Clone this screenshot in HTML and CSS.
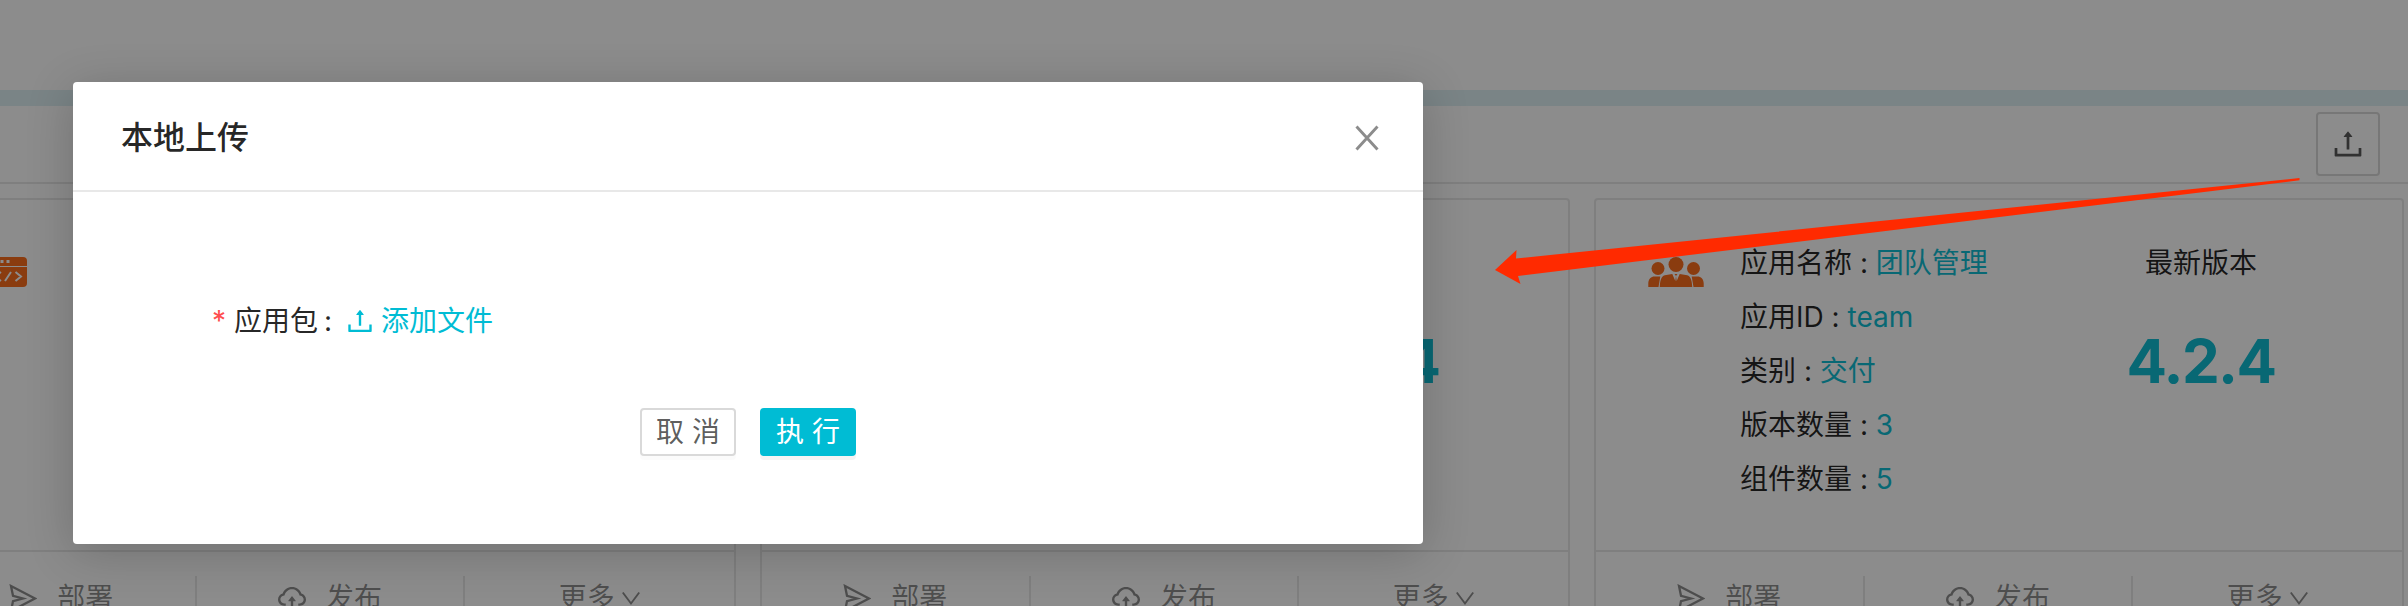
FILE: index.html
```html
<!DOCTYPE html>
<html lang="zh-CN">
<head>
<meta charset="utf-8">
<title>本地上传</title>
<link rel="stylesheet" href="styles.css">
</head>
<body>
<svg class="defs" width="0" height="0">
  <symbol id="upload" viewBox="64 64 896 896">
    <path d="M400 317.700h73.900V656c0 4.400 3.600 8 8 8h60c4.400 0 8-3.600 8-8V317.700H624c6.700 0 10.400-7.700 6.300-12.900L518.300 163a8 8 0 0 0-12.600 0l-112 141.700c-4.100 5.300-.4 13 6.300 13zM878 626h-60c-4.400 0-8 3.600-8 8v154H214V634c0-4.400-3.600-8-8-8h-60c-4.400 0-8 3.600-8 8v198c0 17.700 14.300 32 32 32h684c17.700 0 32-14.300 32-32V634c0-4.400-3.600-8-8-8z"/>
  </symbol>
  <symbol id="plane" viewBox="0 0 28 28">
    <path d="M2 2 26 14.500 2 27 4 17.200 14 14.500 4 11.800z" fill="none" stroke="currentColor" stroke-width="2.300"/>
  </symbol>
  <symbol id="cloud" viewBox="64 64 896 896">
    <path d="M518.300 459a8 8 0 0 0-12.600 0l-112 141.700a7.980 7.980 0 0 0 6.300 12.900h73.900V856c0 4.400 3.600 8 8 8h60c4.400 0 8-3.600 8-8V613.700H624c6.700 0 10.400-7.700 6.300-12.900L518.300 459z"/>
    <path d="M811.400 366.700C765.600 245.900 648.900 160 512.200 160S258.800 245.800 213 366.600C127.300 389.100 64 467.200 64 560c0 110.500 89.500 200 199.900 200H304c4.400 0 8-3.600 8-8v-60c0-4.400-3.600-8-8-8h-40.100c-33.700 0-65.400-13.400-89-37.700-23.500-24.200-36-56.800-34.900-90.600.9-26.400 9.900-51.200 26.200-72.100 16.700-21.300 40.100-36.800 66.100-43.700l37.900-9.900 13.900-36.600c8.600-22.800 20.600-44.100 35.700-63.400a245.600 245.600 0 0 1 52.400-49.900c41.100-28.900 89.500-44.200 140-44.200s98.900 15.300 140 44.200c19.900 14 37.500 30.800 52.400 49.900 15.100 19.300 27.100 40.700 35.700 63.400l13.800 36.500 37.800 10C846.100 454.500 884 503.800 884 560c0 33.100-12.900 64.300-36.300 87.700a123.070 123.070 0 0 1-87.600 36.300H720c-4.400 0-8 3.600-8 8v60c0 4.400 3.600 8 8 8h40.100C870.500 760 960 670.500 960 560c0-92.700-63.100-170.700-148.600-193.300z"/>
  </symbol>
  <symbol id="down" viewBox="0 0 20 20">
    <path d="M1.800 4.500 10 15.500 18.200 4.500" fill="none" stroke="currentColor" stroke-width="1.900"/>
  </symbol>
</svg>

<div class="page">
  <div class="top"></div>
  <div class="toolbar">
    <button class="upload-btn"><svg width="32" height="32"><use href="#upload"/></svg></button>
  </div>
  <div class="cards">
    <section class="card">
      <div class="body">
        <svg class="app-icon code" width="56" height="56" viewBox="0 0 56 56">
          <rect y="13" width="56" height="30" rx="4"/>
          <path d="M0 22.500h56" stroke="#fff" stroke-width="1.200"/>
          <path d="M29.500 17.500h3M35.500 17.500h3" stroke="#fff" stroke-width="3"/>
          <path d="M30 28l-6 4.500 6 4.500M40 28l-6 9M44.500 28l5.500 4.500-5.500 4.500" fill="none" stroke="#fff" stroke-width="2"/>
        </svg>
      </div>
      <footer class="actions">
        <a><svg width="28" height="28"><use href="#plane"/></svg><span>部署</span></a>
        <a><svg width="28" height="28"><use href="#cloud"/></svg><span>发布</span></a>
        <a class="more"><span>更多</span><svg width="20" height="20"><use href="#down"/></svg></a>
      </footer>
    </section>
    <section class="card">
      <div class="body">
        <div class="version"><div>最新版本</div><strong>4.2.4</strong></div>
      </div>
      <footer class="actions">
        <a><svg width="28" height="28"><use href="#plane"/></svg><span>部署</span></a>
        <a><svg width="28" height="28"><use href="#cloud"/></svg><span>发布</span></a>
        <a class="more"><span>更多</span><svg width="20" height="20"><use href="#down"/></svg></a>
      </footer>
    </section>
    <section class="card">
      <div class="body">
        <svg class="app-icon" width="56" height="56" viewBox="0 0 56 56">
          <circle cx="28" cy="20.500" r="7.500"/>
          <circle cx="10" cy="24.500" r="6.500"/><circle cx="45.500" cy="24.500" r="6.500"/>
          <path d="M.3 43v-3.500c0-4.500 3-7 6-7h6L10.500 43zM55.700 43v-3.500c0-4.500-3-7-6-7h-6l1.800 10.500z"/>
          <path d="M11.800 43c.3-8 2.200-12 6.500-12l6-1 3 7 .7-5-1.500-2h3l-1.500 2 .7 5 3-7 6 1c4.300 0 6.200 4 6.500 12z"/>
        </svg>
        <div class="info">
          <p>应用名称 : <em>团队管理</em></p>
          <p>应用ID : <em>team</em></p>
          <p>类别 : <em>交付</em></p>
          <p>版本数量 : <em>3</em></p>
          <p>组件数量 : <em>5</em></p>
        </div>
        <div class="version"><div>最新版本</div><strong>4.2.4</strong></div>
      </div>
      <footer class="actions">
        <a><svg width="28" height="28"><use href="#plane"/></svg><span>部署</span></a>
        <a><svg width="28" height="28"><use href="#cloud"/></svg><span>发布</span></a>
        <a class="more"><span>更多</span><svg width="20" height="20"><use href="#down"/></svg></a>
      </footer>
    </section>
  </div>
</div>

<div class="mask"></div>

<div class="modal">
  <header class="modal-head">
    <h1>本地上传</h1>
    <svg width="24" height="26" viewBox="0 0 24 26"><path d="M1.500 1.500 22.500 24.500M22.500 1.500 1.500 24.500" stroke="#8c8c8c" stroke-width="2.900"/></svg>
  </header>
  <div class="modal-body">
    <div class="field">
      <span class="star">*</span><span class="label">应用包</span><span class="colon">:</span>
      <a class="add"><svg width="28" height="28"><use href="#upload"/></svg><span>添加文件</span></a>
    </div>
    <div class="buttons">
      <button class="btn">取 消</button>
      <button class="btn primary">执 行</button>
    </div>
  </div>
</div>

<svg class="arrow" width="810" height="106" viewBox="0 0 810 106">
  <path d="M0 92 21.500 72 21 80.500 804.500 0V2.300L23 98 25.500 106z" fill="#ff2a00"/>
</svg>
</body>
</html>
```

FILE: styles.css
```css
* { box-sizing: border-box; }
body {
  margin: 0;
  height: 606px;
  position: relative;
  overflow: hidden;
  background: #fff;
  color: rgba(0, 0, 0, .85);
  font: 28px/42px Inter, "Noto Sans CJK SC", sans-serif;
  font-feature-settings: "calt" 0;
}
.defs { position: absolute; }
svg { display: block; fill: currentColor; flex: none; }
p, h1 { margin: 0; }
em { font-style: normal; color: #0fbdd3; }
.page { height: 606px; overflow: hidden; }
.top { height: 106px; border-bottom: 16px solid #dff0f5; }
.toolbar {
  height: 78px;
  border-bottom: 2px solid #e8e8e8;
  padding: 6px 28px 0 0;
  display: flex;
  justify-content: flex-end;
}
.upload-btn {
  width: 64px;
  height: 64px;
  padding: 0;
  border: 2px solid #d9d9d9;
  border-radius: 4px;
  background: #fff;
  color: rgba(0, 0, 0, .65);
  display: flex;
  align-items: center;
  justify-content: center;
  box-shadow: 0 4px 0 rgba(0, 0, 0, .015);
}
.cards {
  display: grid;
  grid-template-columns: repeat(3, 810px);
  gap: 24px;
  margin: 14px 0 0 -74px;
}
.card { border: 2px solid #e8e8e8; border-radius: 4px; height: 460px; }
.body { height: 350px; padding: 36px 0 0 52px; display: flex; }
.app-icon { margin-top: 8px; color: #fb6d1d; }
.app-icon.code { margin-left: -9px; }
.info { width: 376px; margin-left: 36px; line-height: 54px; }
.version { width: 190px; margin-left: auto; margin-right: 108px; text-align: center; line-height: 54px; }
.version strong {
  display: block;
  margin-top: 31px;
  font-size: 60px;
  line-height: 80px;
  font-weight: 700;
  letter-spacing: -1.6px;
  color: #0fbdd3;
}
.actions {
  border-top: 2px solid #e8e8e8;
  padding-top: 24px;
  display: grid;
  grid-template-columns: repeat(3, 1fr);
  color: rgba(0, 0, 0, .45);
}
.actions a {
  height: 44px;
  border-right: 2px solid #e8e8e8;
  display: flex;
  align-items: center;
  justify-content: center;
  gap: 20px;
}
.actions a:last-child { border-right: 0; }
.actions .more { gap: 6px; }
.mask { position: absolute; inset: 0; background: rgba(0, 0, 0, .45); }
.modal {
  position: absolute;
  left: 73px;
  top: 82px;
  width: 1350px;
  height: 462px;
  background: #fff;
  border-radius: 4px;
  box-shadow: 0 8px 48px rgba(0, 0, 0, .2);
}
.modal-head {
  height: 110px;
  padding: 3px 44px 0 48px;
  border-bottom: 2px solid #e8e8e8;
  display: flex;
  align-items: center;
  justify-content: space-between;
}
.modal-head h1 { font-size: 32px; line-height: 44px; font-weight: 500; }
.field { display: flex; align-items: center; height: 42px; margin: 108px 0 0 139px; }
.star { color: #ff4d4f; width: 22px; }
.label { width: 84px; }
.colon { width: 28px; padding-left: 6px; }
.add { display: flex; align-items: center; gap: 7px; color: #00bcd4; }
.buttons { display: flex; gap: 24px; margin: 66px 0 0 567px; }
.btn {
  width: 96px;
  height: 48px;
  padding: 0;
  border: 2px solid #d9d9d9;
  border-radius: 4px;
  background: #fff;
  color: rgba(0, 0, 0, .65);
  font: inherit;
  line-height: 44px;
  box-shadow: 0 4px 0 rgba(0, 0, 0, .015);
}
.btn.primary {
  background: #00bcd4;
  border-color: #00bcd4;
  color: #fff;
  box-shadow: 0 4px 0 rgba(0, 0, 0, .045);
}
.arrow { position: absolute; left: 1495px; top: 178px; overflow: visible; }
```
